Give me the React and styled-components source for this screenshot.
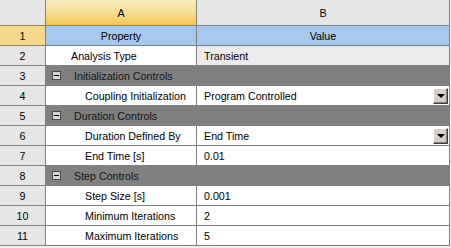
import React from "react";
import styled, { createGlobalStyle } from "styled-components";

const Global = createGlobalStyle`
  html, body {
    margin: 0;
    background: #f0f0f0;
  }
  body {
    font-family: "Liberation Sans", Arial, sans-serif;
    font-size: 10.7px;
    color: #000;
  }
`;

const rows = [
  { type: "prop", name: "Analysis Type", value: "Transient", readOnly: true, top: true },
  { type: "group", name: "Initialization Controls" },
  { type: "prop", name: "Coupling Initialization", value: "Program Controlled", combo: true },
  { type: "group", name: "Duration Controls" },
  { type: "prop", name: "Duration Defined By", value: "End Time", combo: true },
  { type: "prop", name: "End Time [s]", value: "0.01" },
  { type: "group", name: "Step Controls" },
  { type: "prop", name: "Step Size [s]", value: "0.001" },
  { type: "prop", name: "Minimum Iterations", value: "2" },
  { type: "prop", name: "Maximum Iterations", value: "5" },
];

const Grid = styled.div`
  display: grid;
  grid-template-columns: 46px 151px 253px;
  grid-template-rows: 26px repeat(11, 20px);
  width: 450px;
`;

const Cell = styled.div`
  box-sizing: border-box;
  border-right: 1px solid #808080;
  border-bottom: 1px solid #808080;
  display: flex;
  align-items: center;
  white-space: nowrap;
  overflow: hidden;
`;

const Corner = styled(Cell)`
  background: #e6e6e6;
`;

const ColHead = styled(Cell)`
  justify-content: center;
  background: ${({ $active }) =>
    $active ? "linear-gradient(#f9ecc2, #f7dc8e 55%, #f4c550)" : "#e6e6e6"};
`;

const RowNum = styled(Cell)`
  justify-content: center;
  background: ${({ $active }) => ($active ? "#f5d88e" : "#e6e6e6")};
`;

const TitleCell = styled(Cell)`
  position: relative;
  justify-content: center;
  background: #a6c9ef;

  ${({ $focus }) =>
    $focus &&
    `
    &::after {
      content: "";
      position: absolute;
      top: -1px;
      left: -1px;
      right: -1px;
      bottom: -1px;
      border: 1px dotted #000;
    }
  `}
`;

const NameCell = styled(Cell)`
  background: #fff;
  padding-left: ${({ $indent }) => $indent}px;
`;

const ValueCell = styled(Cell)`
  background: ${({ $readOnly }) => ($readOnly ? "#ebebeb" : "#fff")};
  padding-left: 7px;
  padding-right: 1px;
  justify-content: space-between;
`;

const GroupCell = styled(Cell)`
  grid-column: span 2;
  background: #808080;
  padding-left: 6px;
  gap: 13px;
  color: #141414;
`;

const MinusBox = styled.span`
  box-sizing: border-box;
  width: 9px;
  height: 9px;
  border: 1px solid #4a4a4a;
  background: #d9d9d9;
  display: flex;
  align-items: center;
  justify-content: center;

  &::before {
    content: "";
    width: 5px;
    height: 1px;
    background: #000;
  }
`;

const ComboButton = styled.span`
  box-sizing: border-box;
  width: 15px;
  height: 16px;
  background: #d4d0c8;
  border-top: 1px solid #fff;
  border-left: 1px solid #fff;
  border-right: 1px solid #404040;
  border-bottom: 1px solid #404040;
  box-shadow: inset -1px -1px 0 #808080;
  display: flex;
  align-items: center;
  justify-content: center;

  &::before {
    content: "";
    width: 0;
    height: 0;
    border-left: 4px solid transparent;
    border-right: 4px solid transparent;
    border-top: 4px solid #000;
    margin-top: 1px;
  }
`;

export default function App() {
  return (
    <>
      <Global />
      <Grid>
        <Corner />
        <ColHead $active>A</ColHead>
        <ColHead>B</ColHead>

        <RowNum $active>1</RowNum>
        <TitleCell $focus>Property</TitleCell>
        <TitleCell>Value</TitleCell>

        {rows.map((r, i) => (
          <React.Fragment key={i}>
            <RowNum>{i + 2}</RowNum>
            {r.type === "group" ? (
              <GroupCell>
                <MinusBox />
                <span>{r.name}</span>
              </GroupCell>
            ) : (
              <>
                <NameCell $indent={r.top ? 25 : 39}>{r.name}</NameCell>
                <ValueCell $readOnly={r.readOnly}>
                  <span>{r.value}</span>
                  {r.combo && <ComboButton />}
                </ValueCell>
              </>
            )}
          </React.Fragment>
        ))}
      </Grid>
    </>
  );
}
